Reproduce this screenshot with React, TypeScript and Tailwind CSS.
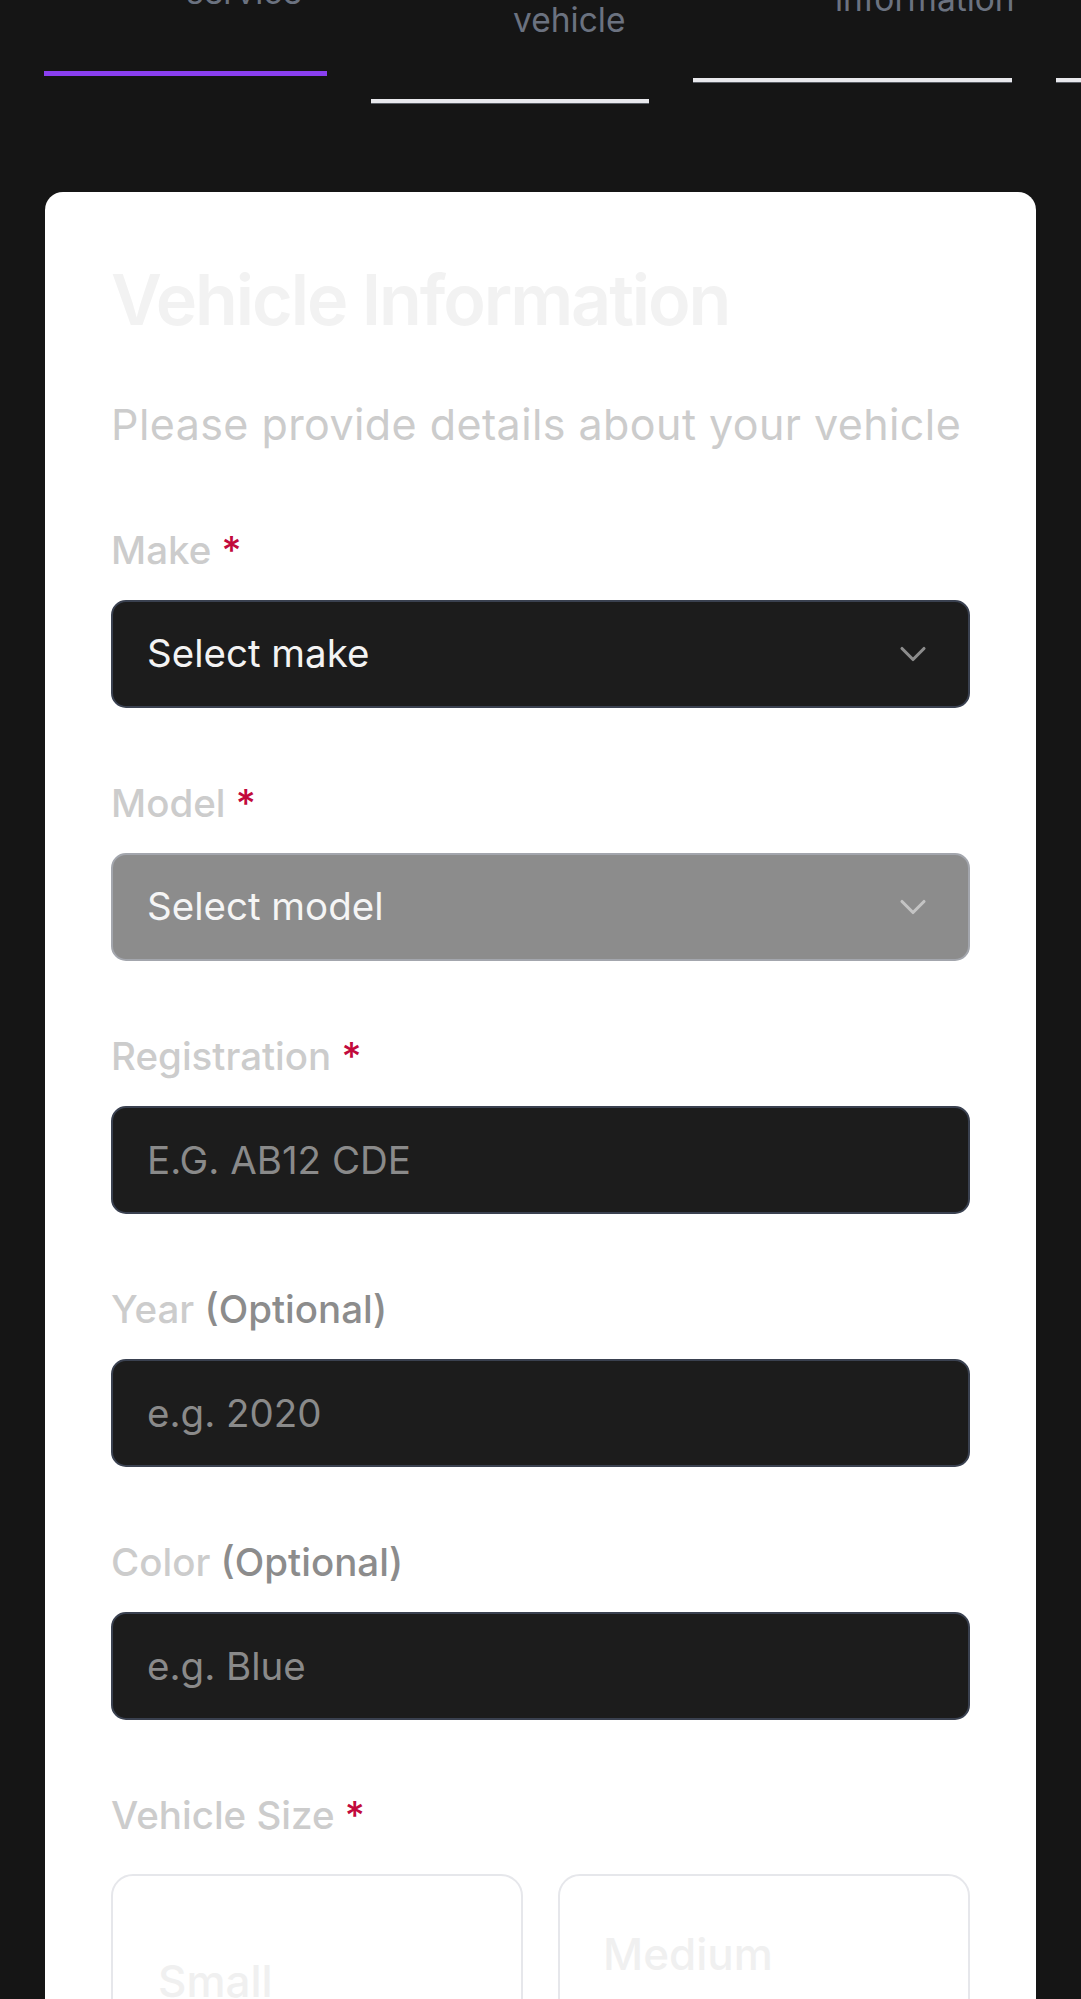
import React from 'react';
import { ChevronDown } from 'lucide-react';

type Step = { lines: string[]; width: string; offset: string; active?: boolean };

const steps: Step[] = [
  { lines: ['Select', 'service'], width: 'w-[283px]', offset: 'mt-0', active: true },
  { lines: ['Your', 'vehicle'], width: 'w-[278px]', offset: 'mt-[28px]' },
  { lines: ['Contact', 'information'], width: 'w-[319px]', offset: 'mt-[7px]' },
  { lines: ['Review', 'booking'], width: 'w-[300px]', offset: 'mt-[7px]' },
];

const Label: React.FC<{ text: string; required?: boolean; optional?: boolean }> = ({ text, required, optional }) => (
  <label className="block h-[56px] text-[38.5px] leading-[56px] font-medium text-[#cccccc]">
    {text}
    {required && <span className="text-[#c20a3c]"> *</span>}
    {optional && <span className="text-[#8c8c8c]"> (Optional)</span>}
  </label>
);

const SelectBox: React.FC<{ value: string; disabled?: boolean }> = ({ value, disabled }) => (
  <button
    type="button"
    className={
      disabled
        ? 'flex items-center justify-between w-full h-[108px] pl-[34px] pr-[33px] rounded-[15px] border-2 border-[#a3a6ad] bg-[#8c8c8c] text-[38.5px] text-[#f5f5f5] text-left'
        : 'flex items-center justify-between w-full h-[108px] pl-[34px] pr-[33px] rounded-[15px] border-2 border-[#3a4150] bg-[#1c1c1c] text-[38.5px] text-[#f3f3f3] text-left'
    }
  >
    <span>{value}</span>
    <ChevronDown
      size={44}
      strokeWidth={1.7}
      className={disabled ? 'text-[#c4c4c4]' : 'text-[#8c8c8c]'}
    />
  </button>
);

const TextInput: React.FC<{ placeholder: string; upper?: boolean }> = ({ placeholder, upper }) => (
  <input
    type="text"
    placeholder={placeholder}
    className={
      upper
        ? 'block w-full h-[108px] px-[34px] rounded-[15px] border-2 border-[#3a4150] bg-[#1c1c1c] text-[38.5px] text-white uppercase placeholder:text-[#8a8a8a] outline-none'
        : 'block w-full h-[108px] px-[34px] rounded-[15px] border-2 border-[#3a4150] bg-[#1c1c1c] text-[38.5px] text-white placeholder:text-[#8a8a8a] outline-none'
    }
  />
);

export default function App() {
  return (
    <div className="min-h-screen bg-[#151515] overflow-hidden font-['Inter','Noto_Sans',sans-serif]">
      <div className="flex items-start gap-[44px] pl-[44px] -mt-[89px] overflow-hidden">
        {steps.map((s) => (
          <div key={s.lines.join(' ')} className={`flex flex-col shrink-0 ${s.width} ${s.offset}`}>
            <div className="pl-[142px] text-[33.5px] leading-[54px] text-[#6b7280] whitespace-nowrap">
              {s.lines.map((l) => (
                <div key={l}>{l}</div>
              ))}
            </div>
            <div
              className={
                s.active
                  ? 'mt-[52px] h-[5px] bg-[#8a3ff0]'
                  : 'mt-[52px] h-[5px] bg-[#e8e8ec] border-b border-[#5b5f66]'
              }
            />
          </div>
        ))}
      </div>

      <div className="mx-[45px] mt-[88px] bg-white rounded-[18px] px-[66px] pt-[66px] pb-[80px]">
        <h1 className="text-[70px] leading-[84px] font-semibold tracking-[-0.03em] text-[#f2f2f2]">Vehicle Information</h1>
        <p className="mt-[52px] text-[43px] leading-[60px] tracking-[0.01em] whitespace-nowrap text-[#cccccc]">
          Please provide details about your vehicle
        </p>

        <div className="mt-[68px] flex flex-col gap-[67px]">
          <div className="flex flex-col gap-[22px]">
            <Label text="Make" required />
            <SelectBox value="Select make" />
          </div>
          <div className="flex flex-col gap-[22px]">
            <Label text="Model" required />
            <SelectBox value="Select model" disabled />
          </div>
          <div className="flex flex-col gap-[22px]">
            <Label text="Registration" required />
            <TextInput placeholder="e.g. AB12 CDE" upper />
          </div>
          <div className="flex flex-col gap-[22px]">
            <Label text="Year" optional />
            <TextInput placeholder="e.g. 2020" />
          </div>
          <div className="flex flex-col gap-[22px]">
            <Label text="Color" optional />
            <TextInput placeholder="e.g. Blue" />
          </div>
          <div className="flex flex-col">
            <Label text="Vehicle Size" required />
            <div className="mt-[31px] grid grid-cols-2 gap-[35px]">
              <div className="h-[320px] rounded-[22px] border-2 border-[#e6e7eb] px-[45px] pt-[72px]">
                <div className="text-[44px] leading-[66px] font-medium text-[#f0f0f0]">Small</div>
              </div>
              <div className="h-[320px] rounded-[22px] border-2 border-[#e6e7eb] px-[43px] pt-[45px]">
                <div className="text-[44px] leading-[66px] font-medium text-[#f0f0f0]">Medium</div>
              </div>
            </div>
          </div>
        </div>
      </div>
    </div>
  );
}
